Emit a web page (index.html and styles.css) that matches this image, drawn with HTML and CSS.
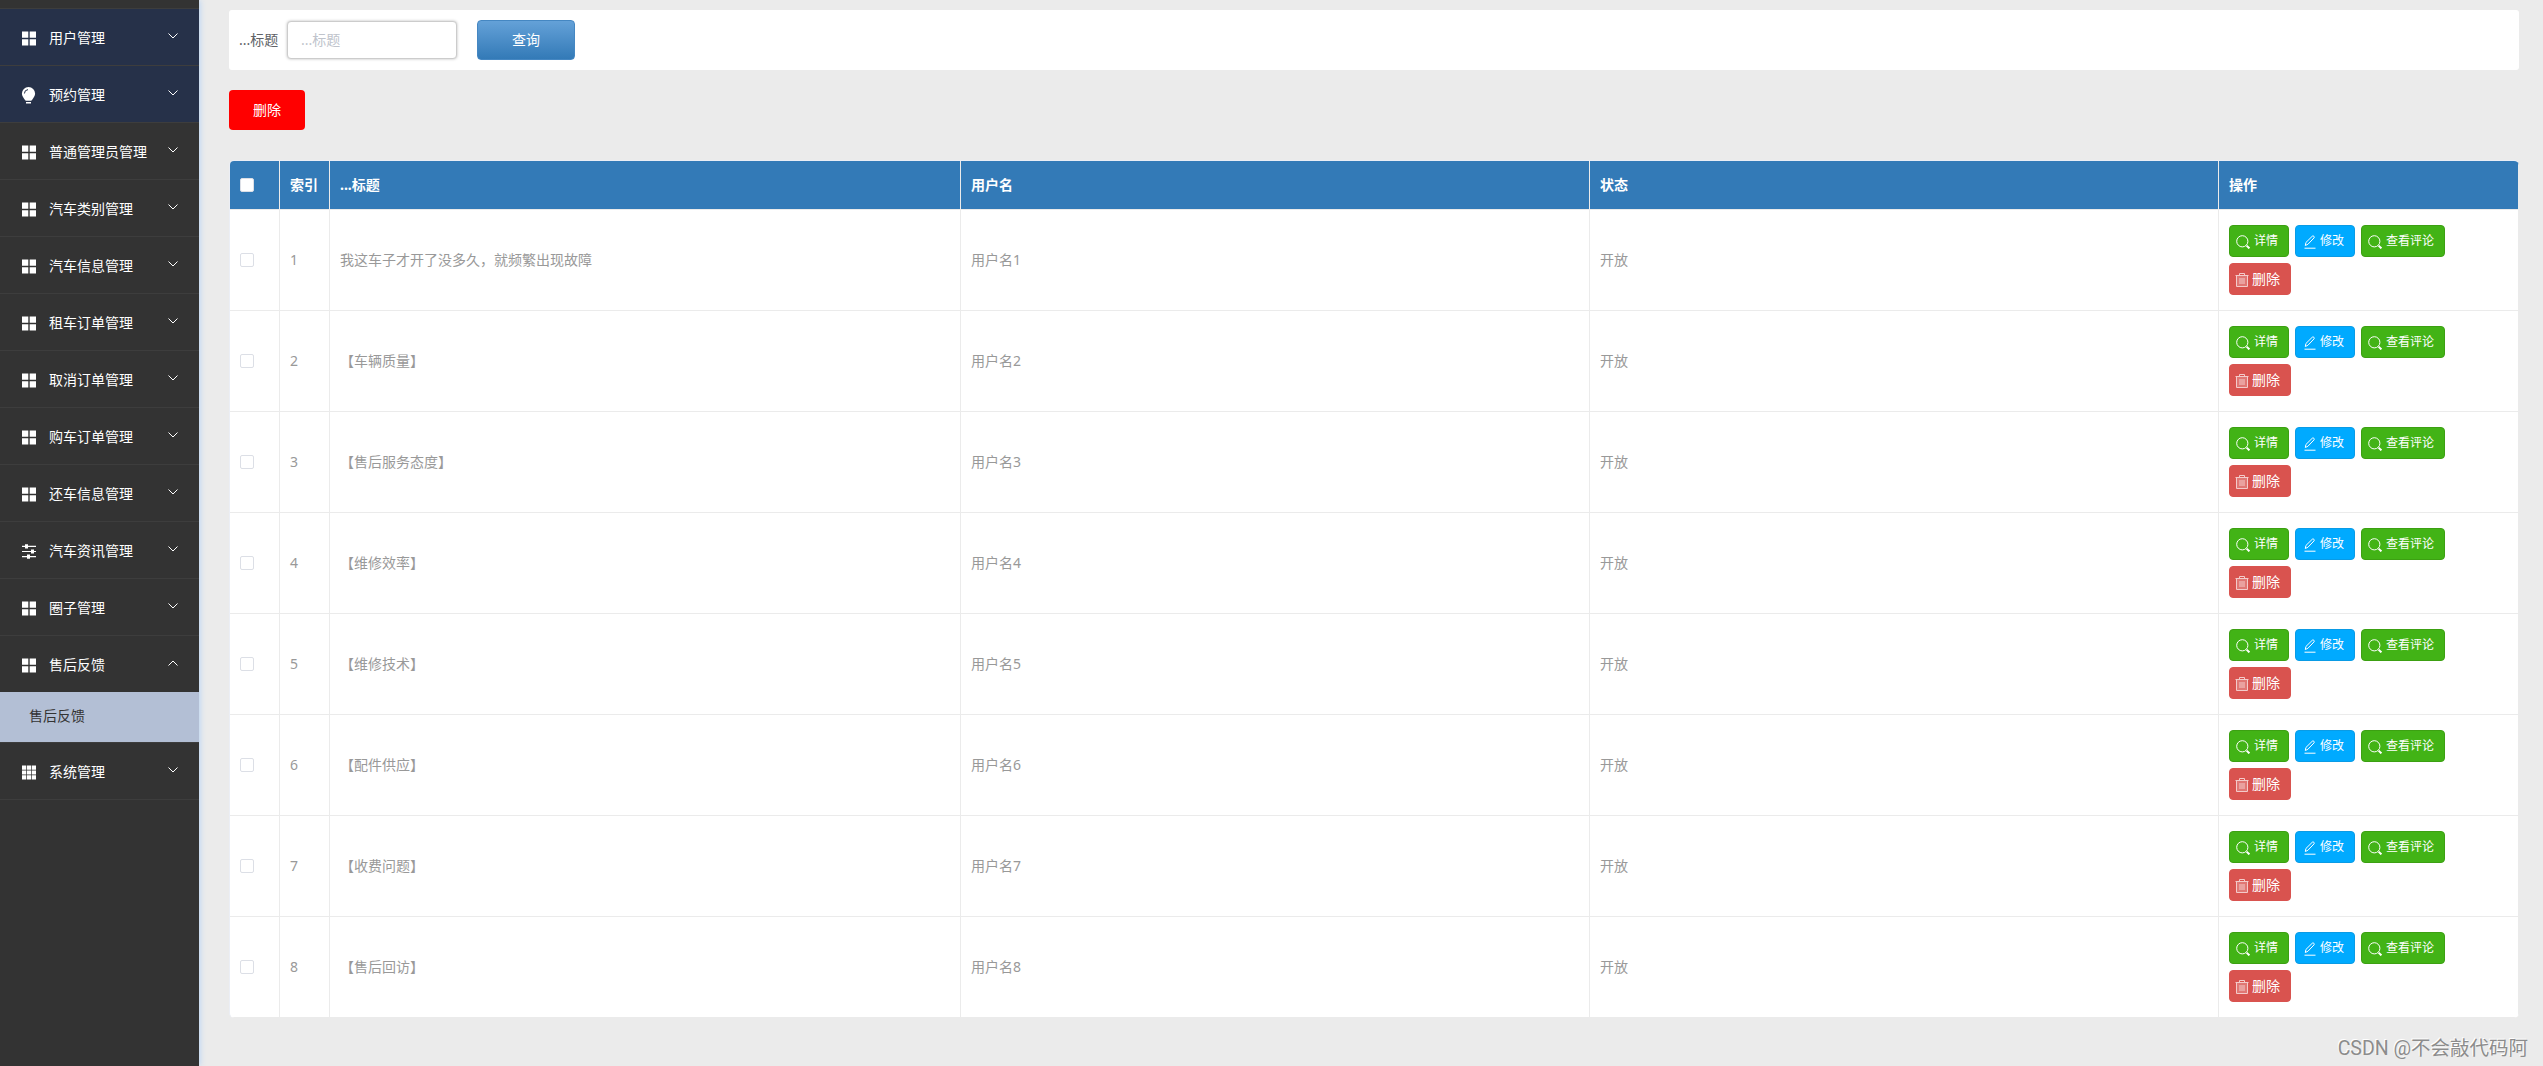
FILE: index.html
```html
<!DOCTYPE html>
<html lang="zh-CN">

<head>
    <meta charset="UTF-8">
    <meta name="viewport" content="width=device-width, initial-scale=1.0">
    <title>售后反馈</title>
    <link rel="stylesheet" href="styles.css">
</head>

<body>
    <!-- 图标 -->
    <svg class="sprite" width="0" height="0">
        <symbol id="menu" viewBox="0 0 16 16">
            <path d="M1 1h6.3v6.3H1zM8.7 1H15v6.3H8.7zM1 8.7h6.3V15H1zM8.7 8.7H15V15H8.7z" />
        </symbol>
        <symbol id="bulb" viewBox="0 0 16 17">
            <path d="M7.500 0A6.600 6.600 0 0 0 .9 6.600c0 2.600 1.600 4.200 2.900 6.200.4.7.7 1 1.300 1h4.800c.6 0 .9-.3 1.300-1 1.300-2 2.900-3.600 2.900-6.200A6.600 6.600 0 0 0 7.500 0zM5 15h5v1.500H5z" />
            <path class="shine" d="M3.400 6.500A4 4 0 0 1 7 2.600" />
        </symbol>
        <symbol id="operation" viewBox="0 0 16 16">
            <path d="M1 2.300h14v1.200H1zM1 7.400h14v1.200H1zM1 12.600h14v1.200H1zM4 .8h3V5H4zM10 5.900h3v4.200h-3zM6 11.100h3v4.200H6z" />
        </symbol>
        <symbol id="grid" viewBox="0 0 16 16">
            <path d="M1 1h4.200v4.200H1zM5.900 1h4.200v4.200H5.900zM10.800 1H15v4.200h-4.200zM1 5.900h4.200v4.200H1zM5.900 5.900h4.200v4.200H5.900zM10.800 5.900H15v4.200h-4.200zM1 10.800h4.200V15H1zM5.900 10.800h4.200V15H5.900zM10.800 10.800H15V15h-4.200z" />
        </symbol>
        <symbol id="arrow" viewBox="0 0 12 12">
            <path d="M1.500 3.500L6 8l4.500-4.500" />
        </symbol>
        <symbol id="search" viewBox="0 0 14 14">
            <circle cx="6.300" cy="6.300" r="5.600" />
            <path class="handle" d="M10.600 10.600l2.800 2.800" />
        </symbol>
        <symbol id="edit" viewBox="0 0 14 14">
            <path d="M2.300 10.500l.6-3L9.300 1.200q.8-.7 1.600.1t.1 1.600L4.900 9.300zM1.500 13.200h11" />
        </symbol>
        <symbol id="trash" viewBox="0 0 14 14">
            <path class="fill" d="M2 3h10v10.500H2z" />
            <path d="M.5 2.500h13M4.500 2.500v-2h5v2M1.500 2.500v11h11v-11M5 5v6M7 5v6M9 5v6" />
        </symbol>
    </svg>

    <div class="container">
        <ul class="sidebar" id="sidebar"></ul>

        <div class="main">
            <form class="search-form">
                <label for="title">...标题</label>
                <input type="text" id="title" placeholder="...标题">
                <button type="button" class="btn-query">查询</button>
            </form>

            <button type="button" class="btn-remove">删除</button>

            <table class="table">
                <colgroup>
                    <col class="col-check">
                    <col class="col-index">
                    <col class="col-title">
                    <col class="col-user">
                    <col class="col-state">
                    <col class="col-action">
                </colgroup>
                <thead>
                    <tr>
                        <th><span class="checkbox"></span></th>
                        <th>索引</th>
                        <th>...标题</th>
                        <th>用户名</th>
                        <th>状态</th>
                        <th>操作</th>
                    </tr>
                </thead>
                <tbody id="rows"></tbody>
            </table>
        </div>
    </div>

    <div class="watermark">CSDN @不会敲代码阿</div>

    <script>
        var menus = [
            { name: '用户管理', icon: 'menu', cls: 'blue' },
            { name: '预约管理', icon: 'bulb', cls: 'blue' },
            { name: '普通管理员管理', icon: 'menu' },
            { name: '汽车类别管理', icon: 'menu' },
            { name: '汽车信息管理', icon: 'menu' },
            { name: '租车订单管理', icon: 'menu' },
            { name: '取消订单管理', icon: 'menu' },
            { name: '购车订单管理', icon: 'menu' },
            { name: '还车信息管理', icon: 'menu' },
            { name: '汽车资讯管理', icon: 'operation' },
            { name: '圈子管理', icon: 'menu' },
            { name: '售后反馈', icon: 'menu', cls: 'open', child: '售后反馈' },
            { name: '系统管理', icon: 'grid' }
        ];
        var titles = ['我这车子才开了没多久，就频繁出现故障', '【车辆质量】', '【售后服务态度】', '【维修效率】',
            '【维修技术】', '【配件供应】', '【收费问题】', '【售后回访】'];

        function icon(name, cls) {
            return `<svg class="icon ${cls || ''}"><use href="#${name}"/></svg>`;
        }

        // 左侧菜单
        document.getElementById('sidebar').innerHTML = menus.map(m => `
            <li class="${m.cls || ''}">
                <div class="menu-title">${icon(m.icon, 'menu-icon')}<span>${m.name}</span>${icon('arrow', 'arrow')}</div>
                ${m.child ? `<div class="submenu">${m.child}</div>` : ''}
            </li>`).join('');

        // 表格数据
        document.getElementById('rows').innerHTML = titles.map((title, i) => `
            <tr>
                <td><span class="checkbox"></span></td>
                <td>${i + 1}</td>
                <td>${title}</td>
                <td>用户名${i + 1}</td>
                <td>开放</td>
                <td>
                    <div class="actions">
                        <button class="btn green">${icon('search')}详情</button>
                        <button class="btn cyan">${icon('edit')}修改</button>
                        <button class="btn green wide">${icon('search')}查看评论</button>
                        <button class="btn red">${icon('trash')}删除</button>
                    </div>
                </td>
            </tr>`).join('');
    </script>
</body>

</html>
```
FILE: styles.css
```css
* {
    box-sizing: border-box;
}

body {
    margin: 0;
    background: #ebebeb;
    font-family: "Noto Sans", "Noto Sans CJK SC", sans-serif;
    font-size: 14px;
    overflow: hidden;
}

button,
input {
    font-family: inherit;
}

.sprite {
    position: absolute;
}

.icon {
    flex: none;
    width: 14px;
    height: 14px;
    fill: none;
    stroke: #fff;
}

.container {
    display: flex;
    height: 100vh;
}

/* 左侧菜单 */
.sidebar {
    flex: none;
    width: 199px;
    margin: 0;
    padding: 8px 0 0;
    list-style: none;
    background: #333;
    color: #fff;
    box-shadow: 1px 0 6px #b8d4f5;
}

.sidebar::before {
    content: "";
    display: block;
    height: 1px;
    background: #3d3d3d;
}

.sidebar li {
    border-bottom: 1px solid #3d3d3d;
}

.menu-title {
    display: flex;
    align-items: center;
    height: 56px;
    padding: 2px 20px 0 21px;
}

.menu-title span {
    margin-top: -3px;
}

.blue .menu-title {
    background: #263149;
}

.menu-icon {
    width: 16px;
    height: 17px;
    margin-right: 12px;
    fill: #fff;
    stroke: none;
}

.shine {
    fill: none;
    stroke: #263149;
}

.arrow {
    width: 12px;
    height: 12px;
    margin: -5px 0 0 auto;
}

.open .arrow {
    transform: rotate(180deg);
}

.submenu {
    height: 50px;
    padding-left: 29px;
    line-height: 48px;
    background: #b3bfd5;
    color: #333;
}

/* 右侧内容 */
.main {
    flex: 1;
    padding: 10px 24px 0 30px;
}

.search-form {
    display: flex;
    align-items: center;
    height: 60px;
    padding: 0 10px;
    background: #fff;
    border-radius: 3px;
    color: #606266;
}

.search-form label {
    width: 38px;
    margin-top: -2px;
    white-space: nowrap;
}

.search-form input {
    width: 170px;
    height: 38px;
    margin: 0 20px 0 10px;
    padding: 0 13px 2px;
    border: 1px solid #ccc;
    border-radius: 4px;
    box-shadow: 0 0 3px #bbb;
    font-size: 14px;
    outline: none;
}

.search-form input::placeholder {
    color: #c0c4cc;
}

.btn-query {
    width: 98px;
    height: 40px;
    padding: 0 0 2px;
    border: 1px solid #4587c2;
    border-radius: 4px;
    background: linear-gradient(#64a1d8, #337ab7);
    color: #fff;
    font-size: 14px;
}

.btn-remove {
    display: block;
    width: 76px;
    height: 40px;
    margin: 20px 0 30px;
    padding: 0 0 2px;
    border: 0;
    border-radius: 4px;
    background: #f00;
    color: #fff;
    font-size: 14px;
}

.table {
    width: 2290px;
    border: 1px solid #ebeef5;
    border-right-width: 0;
    border-bottom: 0;
    border-radius: 5px;
    border-spacing: 0;
    table-layout: fixed;
    background: #fff;
    color: #999;
    overflow: hidden;
}

.col-check,
.col-index {
    width: 50px;
}

.col-title {
    width: 631px;
}

.col-user,
.col-state {
    width: 629px;
}

.table th,
.table td {
    padding: 0 10px 2px;
    border-right: 1px solid #ebebeb;
    border-bottom: 1px solid #ebebeb;
    text-align: left;
}

.table th {
    height: 49px;
    background: #337ab7;
    color: #fff;
}

.table td {
    height: 101px;
}

.checkbox {
    display: block;
    width: 14px;
    height: 14px;
    margin-top: 2px;
    border: 1px solid #dcdfe6;
    border-radius: 2px;
    background: #fff;
}

.actions {
    display: flex;
    flex-wrap: wrap;
    gap: 6px;
    width: 240px;
    margin-top: 2px;
}

.btn {
    display: flex;
    align-items: center;
    gap: 4px;
    width: 60px;
    height: 32px;
    padding: 0 0 2px 6px;
    border: 1px solid #3ca012;
    border-radius: 4px;
    color: #fff;
    font-size: 12px;
    white-space: nowrap;
}

.btn .icon {
    margin-top: 3px;
}

.handle {
    stroke-width: 2;
}

.green {
    background: #42b316;
}

.wide {
    width: 84px;
}

.cyan {
    gap: 3px;
    padding-left: 7px;
    border-color: #0a9be5;
    background: #00aaff;
}

.red {
    gap: 3px;
    width: 62px;
    padding-left: 5px;
    border-color: #d9534f;
    background: #d9534f;
    font-size: 14px;
}

.red .icon {
    opacity: .7;
}

.fill {
    fill: rgba(255, 255, 255, .3);
    stroke: none;
}

/* 水印 */
.watermark {
    position: absolute;
    right: 15px;
    bottom: 5px;
    font-family: Roboto, "Noto Sans CJK SC", sans-serif;
    font-size: 19.5px;
    color: #8c8c8c;
    text-shadow: -1px -1px 0 #fff;
}
```
